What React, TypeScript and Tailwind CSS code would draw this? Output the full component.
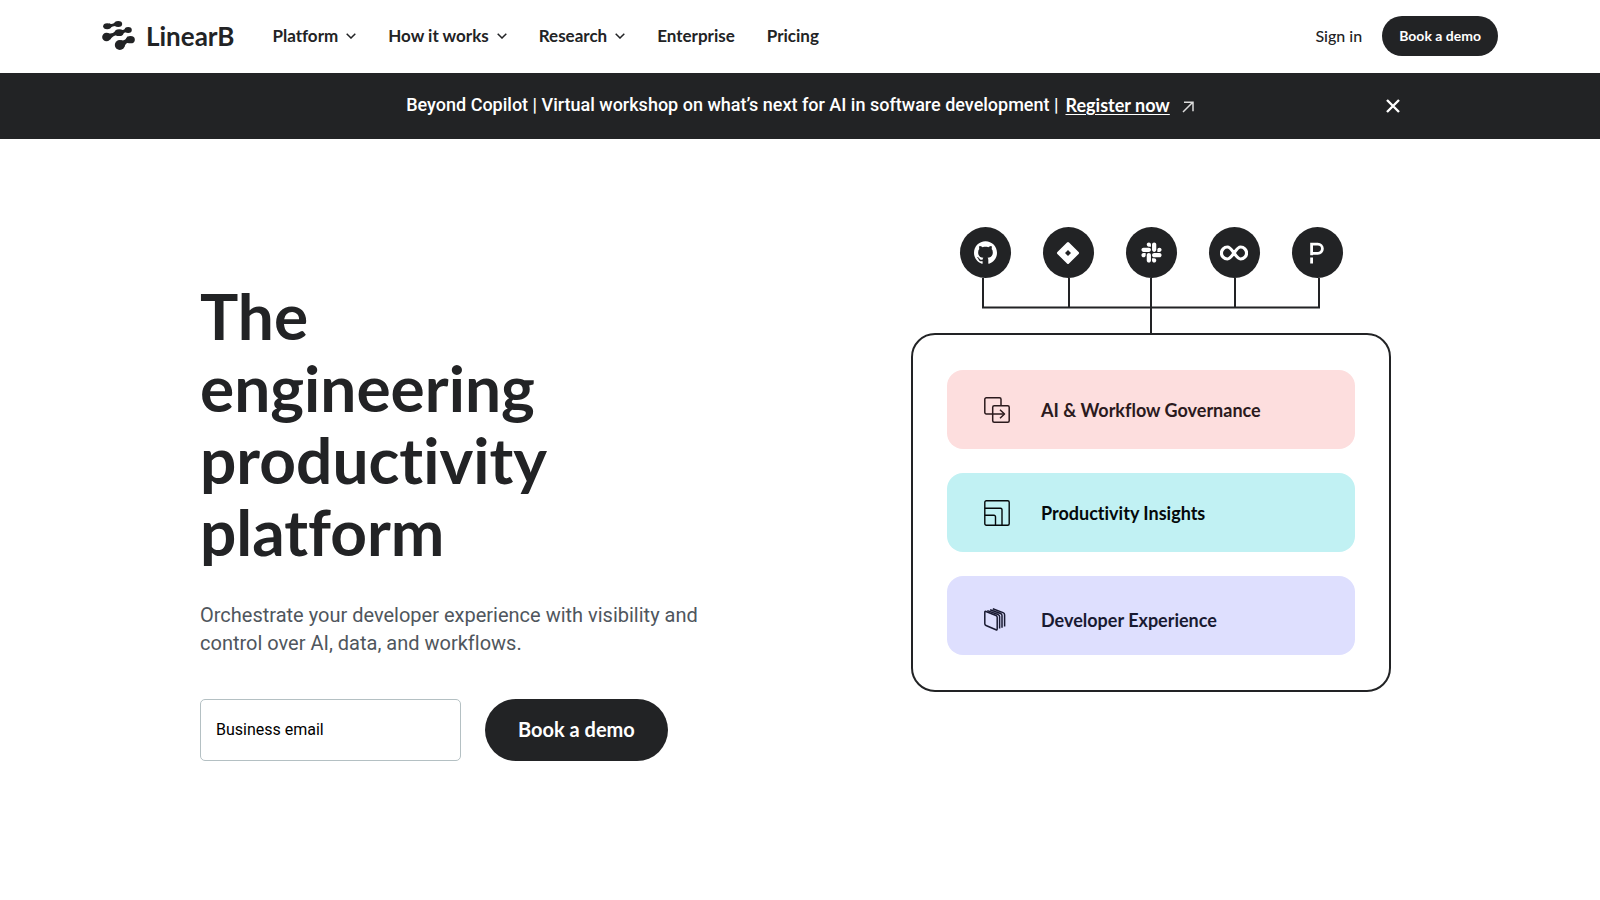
import type { ReactNode } from "react";
import { FaSlack } from "react-icons/fa";
import { SiGithub } from "react-icons/si";

function LogoMark() {
  return (
    <svg viewBox="36 66 98 87" className="h-[29px] w-[33px]" fill="#222325" stroke="#222325" strokeLinecap="round" aria-hidden="true">
      <path d="M51 82 84 74M49 114 87 101 114 93M90 136 121 122" fill="none" strokeWidth="6" />
      <g stroke="none">
        <ellipse cx="51" cy="82" rx="12" ry="9" />
        <path d="M56 73Q66 79 77 69L82 82Q70 78 60 87Z" />
        <ellipse cx="84" cy="75" rx="12" ry="9" />
        <circle cx="49" cy="114" r="13" />
        <path d="M52 102Q66 108 79 93L84 109Q70 106 59 123Z" />
        <ellipse cx="87" cy="101" rx="13" ry="10" />
        <path d="M92 92Q101 96 108 86L112 99Q102 98 95 109Z" />
        <ellipse cx="114" cy="93" rx="11" ry="9" />
        <circle cx="89" cy="138" r="15" />
        <path d="M91 124Q104 128 113 112L120 132Q108 128 102 144Z" />
        <ellipse cx="121" cy="122" rx="13" ry="11" />
      </g>
    </svg>
  );
}

function Chevron() {
  return (
    <svg viewBox="0 0 10 6" className="h-[6px] w-[10px]" fill="none" stroke="#222325" strokeWidth="1.5" aria-hidden="true">
      <path d="M.7.7 5 5 9.3.7" />
    </svg>
  );
}

const navItems = [
  { label: "Platform", menu: true },
  { label: "How it works", menu: true },
  { label: "Research", menu: true },
  { label: "Enterprise", menu: false },
  { label: "Pricing", menu: false },
];

function Header() {
  return (
    <header className="mx-auto flex h-[73px] max-w-[1396px] items-center pb-[2px]">
      <a href="#" className="mr-[38px] flex items-center gap-[11px]">
        <LogoMark />
        <span className="text-[26px] leading-8 font-bold">LinearB</span>
      </a>
      <nav className="flex items-center gap-8 text-[17px] font-bold">
        {navItems.map((item) =>
          item.menu ? (
            <button key={item.label} type="button" className="flex items-center gap-2">
              {item.label}
              <Chevron />
            </button>
          ) : (
            <a key={item.label} href="#">
              {item.label}
            </a>
          ),
        )}
      </nav>
      <div className="ml-auto flex items-center gap-5">
        <a href="#" className="text-base font-medium">
          Sign in
        </a>
        <button type="button" className="h-10 rounded-full bg-[#222325] px-[17px] text-sm font-bold text-white">
          Book a demo
        </button>
      </div>
    </header>
  );
}

function Banner() {
  return (
    <div className="bg-[#222325] text-white">
      <div className="mx-auto grid h-[66px] max-w-[1200px] grid-cols-[1fr_auto_1fr] items-center">
        <p className="col-start-2 flex items-center pb-[2px] font-['Roboto',sans-serif] text-lg font-medium">
          Beyond Copilot | Virtual workshop on what’s next for AI in software development |
          <a href="#" className="ml-[7px] flex items-center gap-3 font-['Lato',sans-serif] font-bold">
            <span className="underline underline-offset-2">Register now</span>
            <svg viewBox="0 0 12 12" className="mt-1 h-3 w-3" fill="none" stroke="#dcdcdc" strokeWidth="1.5" aria-hidden="true">
              <path d="M1 11 10.5 1.5M2 1.2h9v9" />
            </svg>
          </a>
        </p>
        <button type="button" aria-label="Close banner" className="justify-self-end">
          <svg viewBox="0 0 14 14" className="h-[14px] w-[14px]" stroke="#fff" strokeWidth="2.4" aria-hidden="true">
            <path d="M1 1 13 13M13 1 1 13" />
          </svg>
        </button>
      </div>
    </div>
  );
}

const tools: { name: string; icon: ReactNode }[] = [
  { name: "GitHub", icon: <SiGithub className="h-[23px] w-[23px]" /> },
  {
    name: "Jira",
    icon: (
      <svg viewBox="0 0 24 24" className="h-6 w-6" fill="currentColor" fillRule="evenodd">
        <path d="M11 1.4Q12 .4 13 1.4L22.6 11Q23.6 12 22.6 13L13 22.6Q12 23.6 11 22.6L1.4 13Q.4 12 1.4 11ZM12 9 9 12l3 3 3-3Z" />
      </svg>
    ),
  },
  { name: "Slack", icon: <FaSlack className="h-[23px] w-[23px]" /> },
  {
    name: "CI/CD",
    icon: (
      <svg viewBox="0 0 28 16" className="h-4 w-7" fill="none" stroke="currentColor" strokeWidth="3.2">
        <path d="M14 8C11.5 4.5 10 2 7.400 2a6 6 0 0 0 0 12C10 14 11.5 11.5 14 8s4-6 6.6-6a6 6 0 0 1 0 12C18 14 16.5 11.5 14 8Z" />
      </svg>
    ),
  },
  {
    name: "PagerDuty",
    icon: (
      <svg viewBox="0 0 14 22" className="h-[22px] w-[14px]" fill="none" stroke="currentColor" strokeWidth="2.8">
        <path d="M1.6 13.200V2.2H7.8a4.600 4.600 0 0 1 0 9.2H1.6M1.6 15.6V21.5" />
      </svg>
    ),
  },
];

const pillars: { label: string; tone: string; icon: ReactNode }[] = [
  {
    label: "AI & Workflow Governance",
    tone: "bg-[#fddede] text-[#2b1a1d]",
    icon: (
      <svg viewBox="0 0 26 26" className="h-[26px] w-[26px]" fill="none" stroke="currentColor" strokeWidth="1.5" strokeLinejoin="round">
        <path d="M17 9V2.3a1.5 1.5 0 0 0-1.5-1.5H2.3A1.5 1.5 0 0 0 .8 2.3v13.2A1.5 1.5 0 0 0 2.3 17H20" />
        <rect x="8.7" y="8.8" width="16.5" height="16.4" rx="1.5" />
        <path d="m16 12.8 4.5 4.2-4.5 4.2" />
      </svg>
    ),
  },
  {
    label: "Productivity Insights",
    tone: "bg-[#c1f1f3] text-[#04090b]",
    icon: (
      <svg viewBox="0 0 26 26" className="h-[26px] w-[26px]" fill="none" stroke="currentColor" strokeWidth="1.4">
        <rect x=".8" y=".8" width="24.4" height="24.4" rx="1.5" />
        <path d="M.8 8.2H16.5a1.5 1.5 0 0 1 1.5 1.5V25.2M.8 15.2H10a1.5 1.5 0 0 1 1.5 1.5V25.2" />
      </svg>
    ),
  },
  {
    label: "Developer Experience",
    tone: "bg-[#dedffe] pt-2 text-[#191a32]",
    icon: (
      <svg viewBox="0 0 26 26" className="h-[26px] w-[26px]" fill="none" stroke="currentColor" strokeWidth="1.5" strokeLinejoin="round">
        <path d="M.8 5.2Q.8 4 2 4.5L12 8.5Q13.2 9 13.2 10.2V21.8Q13.2 23.3 12 22.8L2 18.5Q.8 18 .8 16.8Z" />
        <path d="M3.3 3.6 14 7.5Q15.6 8.2 15.6 9.6V21.6M6.1 2.7 16.5 6.5Q18 7.1 18 8.6V20.8M8.8 1.8 19 5.6Q20.6 6.2 20.6 7.8V19.4" />
      </svg>
    ),
  },
];

function Diagram() {
  return (
    <div className="flex w-full max-w-[480px] flex-col items-center">
      <ul className="flex gap-8 text-white">
        {tools.map((tool) => (
          <li key={tool.name} aria-label={tool.name} className="flex h-[51px] w-[51px] items-center justify-center rounded-full bg-[#222325]">
            {tool.icon}
          </li>
        ))}
      </ul>
      <svg viewBox="0 0 480 55" className="h-[55px] w-full" fill="none" stroke="#222325" strokeWidth="2" aria-hidden="true">
        <path d="M72 0V29.5H408V0M158 0V29M240 0V55M324 0V29" />
      </svg>
      <div className="flex w-full flex-col gap-6 rounded-3xl border-2 border-[#222325] px-[34px] py-[35px]">
        {pillars.map((pillar) => (
          <div key={pillar.label} className={`flex h-[79px] items-center gap-[31px] rounded-2xl pl-[37px] text-lg font-bold ${pillar.tone}`}>
            {pillar.icon}
            {pillar.label}
          </div>
        ))}
      </div>
    </div>
  );
}

function Hero() {
  return (
    <main className="mx-auto grid max-w-[1200px] grid-cols-[1fr_498px] pt-[88px] pb-16">
      <section className="pt-[53px]">
        <h1 className="max-w-[400px] text-[64px] leading-[72px] font-bold">The engineering productivity platform</h1>
        <p className="mt-[33px] max-w-[520px] font-['Roboto',sans-serif] text-xl leading-7 text-[#4f565d]">
          Orchestrate your developer experience with visibility and control over AI, data, and workflows.
        </p>
        <form className="mt-[42px] flex gap-6" onSubmit={(event) => event.preventDefault()}>
          <input
            type="email"
            aria-label="Business email"
            placeholder="Business email"
            className="h-[62px] w-[261px] rounded-[5px] border border-[#b4c0c3] px-[15px] pb-[2px] font-['Roboto',sans-serif] text-base placeholder:text-black"
          />
          <button type="submit" className="h-[62px] rounded-full bg-[#222325] px-[33px] pb-[2px] text-xl font-bold text-white">
            Book a demo
          </button>
        </form>
      </section>
      <section className="flex justify-center" aria-label="Platform overview">
        <Diagram />
      </section>
    </main>
  );
}

export default function App() {
  return (
    <div className="min-h-screen bg-white font-['Lato',sans-serif] text-[#222325] [font-variant-ligatures:none]">
      <Header />
      <Banner />
      <Hero />
    </div>
  );
}
